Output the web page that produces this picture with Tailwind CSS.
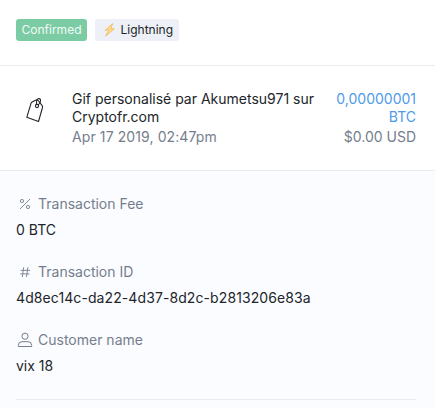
<!DOCTYPE html>
<html lang="en">
<head>
<meta charset="utf-8">
<title>Transaction</title>
<script src="https://cdn.jsdelivr.net/npm/@tailwindcss/browser@4"></script>
</head>
<body class="w-[435px] h-[408px] overflow-hidden bg-white font-[Inter,sans-serif] text-sm text-[#212529]">
<header class="flex h-[66px] items-start gap-2 border-b border-[#e9ebee] px-4 pt-[19px]">
  <span class="flex h-[22px] w-[71px] items-center justify-center rounded-[3px] bg-[#7bcba4] text-xs text-[#f2fbf6]">Confirmed</span>
  <span class="flex h-[22px] w-[84px] items-center rounded-[3px] bg-[#edf0f6] pl-[8px] text-xs text-[#212529]">
    <svg class="mr-[3.5px] h-[14px] w-[14px] shrink-0" viewBox="0 0 14 14"><path d="M9.6.7 2.2 7.2 6 7 2.6 13 11.4 5.8 7.6 5.9Z" fill="#ffe08a" stroke="#f3b455" stroke-width=".8" stroke-linejoin="round"/></svg>
    Lightning
  </span>
</header>
<section class="flex h-[105px] items-start border-b border-[#e9ecef] pr-[19px] pl-4 pt-6 leading-[18px]">
  <svg class="mt-[6px] ml-[8px] h-8 w-6 shrink-0" viewBox="0 0 24 32" fill="none" stroke="#212529" stroke-width="1.1" stroke-linejoin="round">
    <path d="M2.8 21.3 7 7.4Q7.3 6.5 8.2 6L12 4Q13.3 3.5 14.2 4.5L18 9.3Q18.8 10.3 18.5 11.5L14.5 25.5Z"/>
    <circle cx="13" cy="10" r="1.6"/>
    <path d="M12.7 8.5C12 5.5 13 2.5 15 2.6C17.5 2.8 16.7 6.4 14.3 9"/>
  </svg>
  <div class="ml-[24px] w-[250px]">
    <p>Gif personalisé par Akumetsu971 sur Cryptofr.com</p>
    <p class="mt-[2px] tracking-[0.1px] text-[#757e8c]">Apr 17 2019, 02:47pm</p>
  </div>
  <div class="ml-auto w-[82px] text-right">
    <p class="text-[#4d9be8]">0,00000001 BTC</p>
    <p class="mt-[2px] text-[#757e8c]">$0.00 USD</p>
  </div>
</section>
<main class="h-[237px] bg-[#fbfcff] pr-[19px] pl-4 pt-[23px]">
  <dl class="border-b border-[#e9ecef] pb-[23px]">
    <dt class="flex h-5 items-center text-[#757e8c]">
      <svg class="mr-1 h-[18px] w-[18px]" viewBox="0 0 18 18" fill="none" stroke="#757e8c" stroke-width=".9"><path d="M4 14 14 4"/><circle cx="6" cy="6" r="1.6"/><circle cx="12" cy="12" r="1.6"/></svg>Transaction Fee</dt>
    <dd class="mt-[6px] mb-[22px] h-5 leading-5">0 BTC</dd>
    <dt class="flex h-5 items-center text-[#757e8c]">
      <svg class="mr-1 h-[18px] w-[18px]" viewBox="0 0 18 18" fill="none" stroke="#757e8c" stroke-width=".9"><path d="M7.7 4.3 6.3 14M11.9 4.3 10.5 14M4.6 7.4H14M4.2 10.9H13.5"/></svg>Transaction ID</dt>
    <dd class="mt-[6px] mb-[22px] h-5 leading-5 tracking-[0.09px]">4d8ec14c-da22-4d37-8d2c-b2813206e83a</dd>
    <dt class="flex h-5 items-center text-[#757e8c]">
      <svg class="mr-1 h-[18px] w-[18px]" viewBox="0 0 18 18" fill="none" stroke="#757e8c" stroke-width="1"><circle cx="9" cy="5.2" r="3.1"/><path d="M2.3 15.5V14.5Q2.3 10.7 6 10.7H12Q15.7 10.7 15.7 14.5V15.5Z"/></svg>Customer name</dt>
    <dd class="mt-[6px] h-5 leading-5">vix 18</dd>
  </dl>
</main>
</body>
</html>
